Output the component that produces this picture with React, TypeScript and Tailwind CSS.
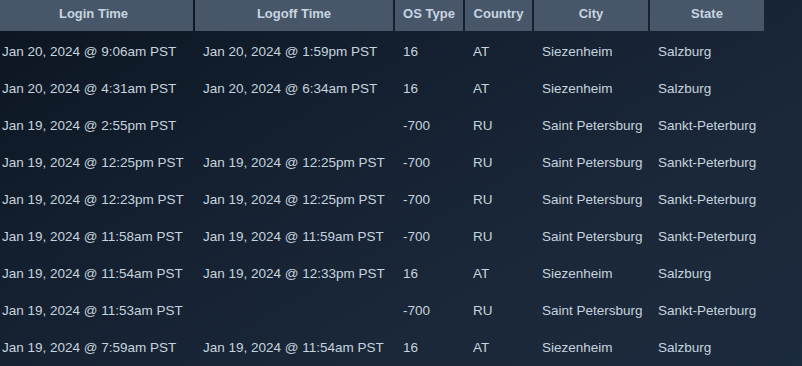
import React from "react";

type Row = {
  login: string;
  logoff: string;
  os: string;
  country: string;
  city: string;
  state: string;
};

const rows: Row[] = [
  { login: "Jan 20, 2024 @ 9:06am PST", logoff: "Jan 20, 2024 @ 1:59pm PST", os: "16", country: "AT", city: "Siezenheim", state: "Salzburg" },
  { login: "Jan 20, 2024 @ 4:31am PST", logoff: "Jan 20, 2024 @ 6:34am PST", os: "16", country: "AT", city: "Siezenheim", state: "Salzburg" },
  { login: "Jan 19, 2024 @ 2:55pm PST", logoff: "", os: "-700", country: "RU", city: "Saint Petersburg", state: "Sankt-Peterburg" },
  { login: "Jan 19, 2024 @ 12:25pm PST", logoff: "Jan 19, 2024 @ 12:25pm PST", os: "-700", country: "RU", city: "Saint Petersburg", state: "Sankt-Peterburg" },
  { login: "Jan 19, 2024 @ 12:23pm PST", logoff: "Jan 19, 2024 @ 12:25pm PST", os: "-700", country: "RU", city: "Saint Petersburg", state: "Sankt-Peterburg" },
  { login: "Jan 19, 2024 @ 11:58am PST", logoff: "Jan 19, 2024 @ 11:59am PST", os: "-700", country: "RU", city: "Saint Petersburg", state: "Sankt-Peterburg" },
  { login: "Jan 19, 2024 @ 11:54am PST", logoff: "Jan 19, 2024 @ 12:33pm PST", os: "16", country: "AT", city: "Siezenheim", state: "Salzburg" },
  { login: "Jan 19, 2024 @ 11:53am PST", logoff: "", os: "-700", country: "RU", city: "Saint Petersburg", state: "Sankt-Peterburg" },
  { login: "Jan 19, 2024 @ 7:59am PST", logoff: "Jan 19, 2024 @ 11:54am PST", os: "16", country: "AT", city: "Siezenheim", state: "Salzburg" },
];

const headers = [
  { label: "Login Time", w: "w-[199px]" },
  { label: "Logoff Time", w: "w-[198px]" },
  { label: "OS Type", w: "w-[68px]" },
  { label: "Country", w: "w-[67px]" },
  { label: "City", w: "w-[114px]" },
  { label: "State", w: "w-[114px]" },
];

export default function App() {
  return (
    <div className="h-[366px] w-[802px] overflow-hidden bg-[linear-gradient(150deg,#0c1521_0%,#142030_35%,#1b2839_70%,#1c2a3e_100%)] font-['Liberation_Sans',Arial,sans-serif]">
      <table className="-ml-[8px] -mt-[6px] w-[774px] table-fixed border-separate border-spacing-[2px]">
        <thead>
          <tr>
            {headers.map((h) => (
              <th
                key={h.label}
                className={`${h.w} h-[35px] bg-[#475669] px-1 text-center text-[13px] font-bold text-[#c7d5e0]`}
              >
                {h.label}
              </th>
            ))}
          </tr>
        </thead>
        <tbody>
          {rows.map((r, i) => (
            <tr key={i} className="h-[35px] text-[13.5px] text-[#c6d4df]">
              <td className="whitespace-nowrap px-2 pt-[3px]">{r.login}</td>
              <td className="whitespace-nowrap px-2 pt-[3px]">{r.logoff}</td>
              <td className="whitespace-nowrap px-2 pt-[3px]">{r.os}</td>
              <td className="whitespace-nowrap px-2 pt-[3px]">{r.country}</td>
              <td className="whitespace-nowrap px-2 pt-[3px]">{r.city}</td>
              <td className="whitespace-nowrap px-2 pt-[3px]">{r.state}</td>
            </tr>
          ))}
        </tbody>
      </table>
    </div>
  );
}
